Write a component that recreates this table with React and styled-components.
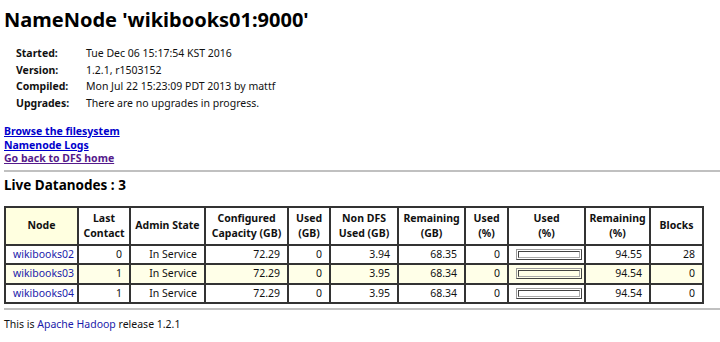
import React from 'react'
import styled, { createGlobalStyle } from 'styled-components'

const GlobalStyle = createGlobalStyle`
  body {
    margin: 0;
    padding: 0 0 0 4px;
    background: #ffffff;
    font-family: "Noto Sans", "Open Sans", sans-serif;
    font-size: 10.5px;
    color: #111;
  }
`

const Title = styled.h1`
  margin: 0;
  padding-top: 7px;
  font-size: 20px;
  line-height: 26px;
  font-weight: 700;
  color: #000;
`

const Info = styled.div`
  display: grid;
  grid-template-columns: 70px auto;
  margin: 12px 0 0 12px;
  line-height: 16.5px;
`

const Label = styled.span`
  font-weight: 700;
`

const Links = styled.div`
  display: flex;
  flex-direction: column;
  margin-top: 14px;
  line-height: 13.5px;
`

const NavLink = styled.a`
  font-weight: 700;
  color: ${p => (p.visited ? '#551a8b' : '#0000cc')};
  text-decoration: underline;
  align-self: flex-start;
`

const Rule = styled.hr`
  margin: ${p => p.m || '4px 0 0 0'};
  border: none;
  height: 2px;
  background: #c0c0c0;
`

const Subtitle = styled.h3`
  margin: 4px 0 0 0;
  font-size: 13.5px;
  line-height: 18px;
  font-weight: 700;
  color: #000;
`

const Nodes = styled.table`
  margin-top: 12px;
  border: 1px solid #333;
  border-spacing: 0;
  table-layout: fixed;
  width: 700px;
  font-size: 10.5px;
`

const Head = styled.th`
  width: ${p => p.w}px;
  box-sizing: border-box;
  border: 1px solid #333;
  padding: 0 1px;
  height: 38px;
  font-weight: 700;
  line-height: 15px;
  text-align: center;
  white-space: nowrap;
  background: ${p => (p.sorted ? '#ffffe0' : '#fff')};
`

const Row = styled.tr`
  background: ${p => (p.alt ? '#ffffe8' : '#fff')};
`

const Cell = styled.td`
  border: 1px solid #333;
  height: 17.5px;
  padding: 0 7px;
  line-height: 15px;
  white-space: nowrap;
  text-align: ${p => p.align || 'right'};
`

const NodeLink = styled.a`
  color: #1a1aaa;
  text-decoration: none;
`

const Bar = styled.div`
  width: 62px;
  height: 7px;
  margin: 0 auto;
  border: 1px solid;
  border-color: #999 #444 #444 #999;
  padding: 1px;
`

const BarFill = styled.div`
  height: 5px;
  border: 1px solid;
  border-color: #444 #aaa #aaa #444;
  background: ${p => (p.alt ? '#ffffe8' : '#fff')};
`

const Footer = styled.div`
  margin-top: 6px;
  line-height: 16px;
`

const FootLink = styled.a`
  color: #1a1aaa;
  text-decoration: none;
`

const columns = [
  { label: 'Node', w: 73, sorted: true },
  { label: ['Last', 'Contact'], w: 52 },
  { label: 'Admin State', w: 75 },
  { label: ['Configured', 'Capacity (GB)'], w: 83 },
  { label: ['Used', '(GB)'], w: 42 },
  { label: ['Non DFS', 'Used (GB)'], w: 68 },
  { label: ['Remaining', '(GB)'], w: 67 },
  { label: ['Used', '(%)'], w: 43 },
  { label: ['Used', '(%)'], w: 77 },
  { label: ['Remaining', '(%)'], w: 65 },
  { label: 'Blocks', w: 53 }
]

const nodes = [
  { name: 'wikibooks02', contact: 0, cap: '72.29', used: 0, nonDfs: '3.94', rem: '68.35', usedPct: 0, remPct: '94.55', blocks: 28 },
  { name: 'wikibooks03', contact: 1, cap: '72.29', used: 0, nonDfs: '3.95', rem: '68.34', usedPct: 0, remPct: '94.54', blocks: 0 },
  { name: 'wikibooks04', contact: 1, cap: '72.29', used: 0, nonDfs: '3.95', rem: '68.34', usedPct: 0, remPct: '94.54', blocks: 0 }
]

export default function App () {
  return (
    <>
      <GlobalStyle />
      <Title>NameNode 'wikibooks01:9000'</Title>
      <Info>
        <Label>Started:</Label><span>Tue Dec 06 15:17:54 KST 2016</span>
        <Label>Version:</Label><span>1.2.1, r1503152</span>
        <Label>Compiled:</Label><span>Mon Jul 22 15:23:09 PDT 2013 by mattf</span>
        <Label>Upgrades:</Label><span>There are no upgrades in progress.</span>
      </Info>
      <Links>
        <NavLink href='#'>Browse the filesystem</NavLink>
        <NavLink href='#'>Namenode Logs</NavLink>
        <NavLink href='#' visited>Go back to DFS home</NavLink>
      </Links>
      <Rule />
      <Subtitle>Live Datanodes : 3</Subtitle>
      <Nodes>
        <thead>
          <tr>
            {columns.map((c, i) => (
              <Head key={i} w={c.w} sorted={c.sorted}>
                {Array.isArray(c.label) ? <>{c.label[0]}<br />{c.label[1]}</> : c.label}
              </Head>
            ))}
          </tr>
        </thead>
        <tbody>
          {nodes.map((n, i) => (
            <Row key={n.name} alt={i === 1}>
              <Cell align='left'><NodeLink href='#'>{n.name}</NodeLink></Cell>
              <Cell>{n.contact}</Cell>
              <Cell>In Service</Cell>
              <Cell>{n.cap}</Cell>
              <Cell>{n.used}</Cell>
              <Cell>{n.nonDfs}</Cell>
              <Cell>{n.rem}</Cell>
              <Cell>{n.usedPct}</Cell>
              <Cell align='center'>
                <Bar><BarFill alt={i === 1} /></Bar>
              </Cell>
              <Cell>{n.remPct}</Cell>
              <Cell>{n.blocks}</Cell>
            </Row>
          ))}
        </tbody>
      </Nodes>
      <Rule m='4px 0 0 0' />
      <Footer>
        This is <FootLink href='#'>Apache Hadoop</FootLink> release 1.2.1
      </Footer>
    </>
  )
}
